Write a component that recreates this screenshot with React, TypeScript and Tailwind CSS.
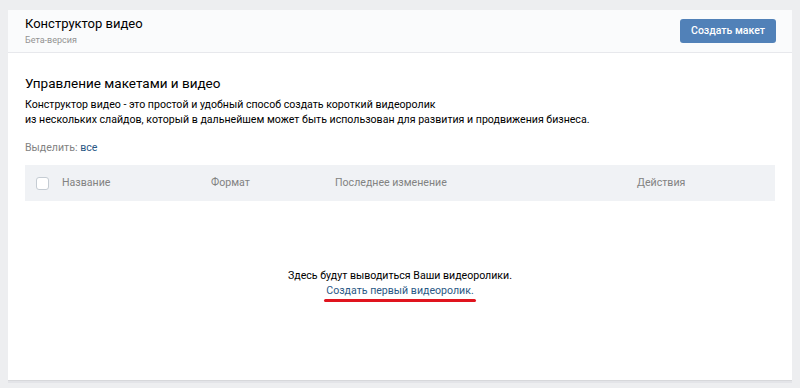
const HEAD_COLS = [
  { label: 'Название', w: 'w-[149px]' },
  { label: 'Формат', w: 'w-[124px]' },
  { label: 'Последнее изменение', w: 'w-[302px]' },
  { label: 'Действия', w: '' },
]

export default function App() {
  return (
    <div className="min-h-[388px] w-[800px] bg-[#edeef0] px-2 pt-[10px] font-['Roboto',sans-serif]">
      <div className="flex h-[370px] flex-col rounded-t-[2px] bg-white shadow-[0_1px_0_0_#d7d8db,0_3px_0_0_#e3e4e8]">
        {/* Header */}
        <div className="flex h-[43px] items-center justify-between border-b border-[#e7e8ec] bg-[#fafbfc] pl-[17px] pr-4">
          <div className="flex flex-col">
            <span className="text-[13px] leading-[16px] text-black">Конструктор видео</span>
            <span className="mt-[3px] text-[9px] leading-[11px] text-[#939393]">Бета-версия</span>
          </div>
          <button className="flex h-[24px] w-[96px] items-center justify-center rounded-[3px] bg-[#5181b8] text-[10.5px] font-medium text-white">
            Создать макет
          </button>
        </div>

        {/* Body */}
        <div className="flex flex-1 flex-col px-[17px] pt-[22px]">
          <h2 className="text-[13.5px] leading-[16px] text-black">Управление макетами и видео</h2>
          <p className="mt-[6px] text-[10.6px] leading-[15px] text-black">
            Конструктор видео - это простой и удобный способ создать короткий видеоролик
            <br />
            из нескольких слайдов, который в дальнейшем может быть использован для развития и продвижения бизнеса.
          </p>
          <div className="mt-[13px] text-[10.6px] leading-[15px] text-[#828282]">
            Выделить: <span className="text-[#2a5885]">все</span>
          </div>

          {/* Table head */}
          <div className="mt-[10px] flex h-[36px] items-center bg-[#f0f2f5] pl-[11px]">
            <span className="mr-[13px] h-[13px] w-[13px] rounded-[3px] border border-[#c5ccd3] bg-white" />
            {HEAD_COLS.map((col) => (
              <span key={col.label} className={`${col.w} text-[10.6px] text-[#828282]`}>
                {col.label}
              </span>
            ))}
          </div>

          {/* Empty state */}
          <div className="mt-[67px] flex flex-col items-center text-[10.6px] leading-[15px]">
            <span className="text-black">Здесь будут выводиться Ваши видеоролики.</span>
            <span className="text-[#2a5885]">Создать первый видеоролик.</span>
            <span className="mt-[1px] h-[3px] w-[152px] rounded-full bg-[#e0141e]" />
          </div>
        </div>
      </div>
    </div>
  )
}
